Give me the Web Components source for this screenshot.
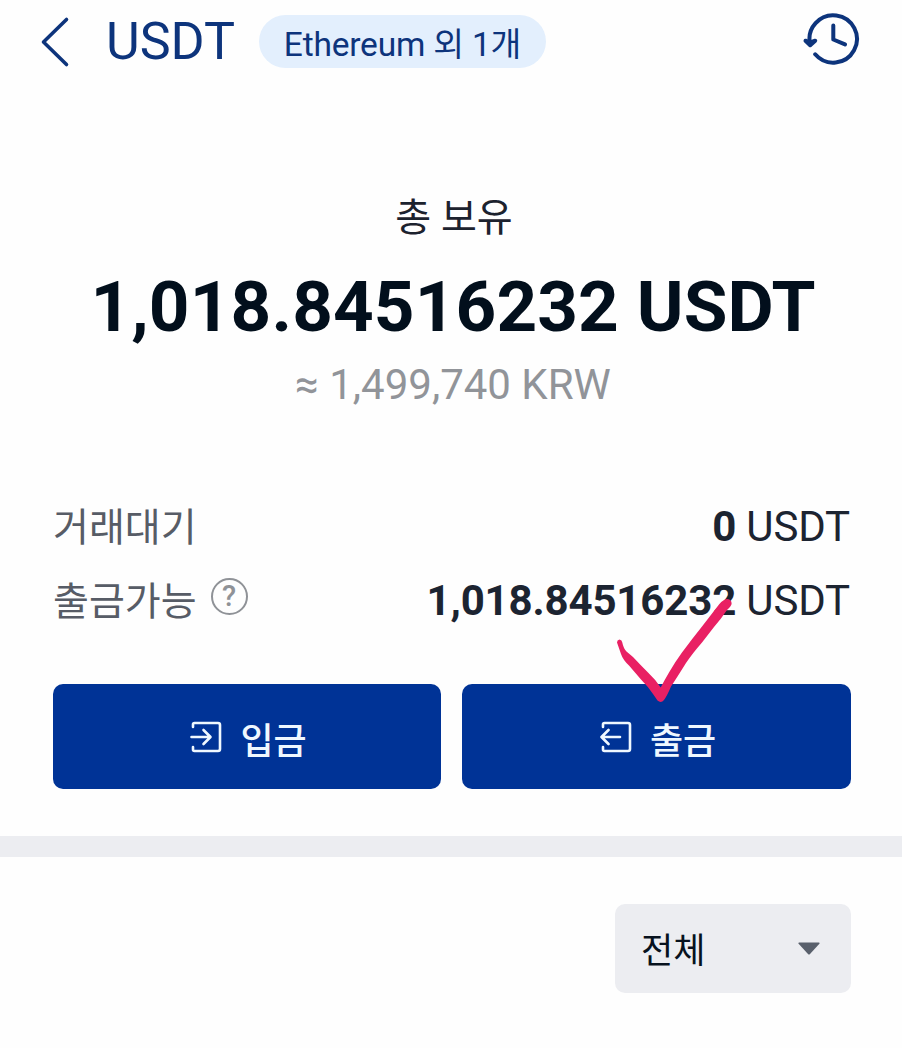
<!DOCTYPE html>
<html lang="ko">
<head>
<meta charset="utf-8">
<title>USDT</title>
<style>
  body {
    margin: 0;
    background: #fefefe;
    font-family: Roboto, "Noto Sans CJK KR", sans-serif;
  }
</style>
</head>
<body>
<wallet-page></wallet-page>

<script>
class WalletElement extends HTMLElement {

  connectedCallback() {
    if (!this.shadowRoot) {
      this.attachShadow({mode: 'open'});
      this.render();
    }
  }

  render() {
    const template = document.createElement('template');
    template.innerHTML = this.template();
    this.shadowRoot.appendChild(template.content.cloneNode(true));
  }
}

class WalletHeader extends WalletElement {
  template() {
    return `
      <style>
        :host {
          display: flex;
          align-items: center;
          box-sizing: border-box;
          height: 83px;
          padding: 0 40px 0 38px;
          color: #0d347c;
        }
        svg {
          display: block;
          fill: none;
          stroke: currentColor;
          stroke-width: 3.6;
          stroke-linecap: round;
          stroke-linejoin: round;
        }
        h1 {
          margin: 0 0 0 34px;
          width: 132px;
          font-size: 52px;
          font-weight: 400;
          line-height: 84px;
        }
        .network {
          box-sizing: border-box;
          width: 287px;
          height: 53px;
          margin-left: 21px;
          padding-top: 5px;
          border-radius: 27px;
          background: #e3effd;
          font-size: 33.5px;
          letter-spacing: -.2px;
          line-height: 49px;
          text-align: center;
          white-space: nowrap;
        }
        .history {
          margin: -6px 0 0 auto;
        }
      </style>
      <svg width="34" height="54" viewBox="0 0 34 54"><path d="M28.5 4.5 5.5 27 28.5 49.5"/></svg>
      <h1><slot></slot></h1>
      <div class="network"><slot name="network"></slot></div>
      <svg class="history" width="60" height="56" viewBox="0 0 60 56">
        <path stroke-width="4" d="M8.2 33.500A23.7 23.700 0 1 1 13.2 43.300M31.300 14.500V28.500L43 33.400"/>
        <path stroke-width="4" fill="currentColor" d="M3.500 29.700 8.200 34.200 13.200 29.700 8.200 31.500Z"/>
      </svg>
    `;
  }
}

class TotalBalance extends WalletElement {
  template() {
    return `
      <style>
        :host {
          display: flex;
          flex-direction: column;
          align-items: center;
          padding-left: 4px;
          white-space: nowrap;
        }
        .label {
          padding-left: 2px;
          color: #1c222e;
          font-size: 39px;
          line-height: 60px;
        }
        .amount {
          margin-top: 14px;
          color: #020f1c;
          font-size: 71px;
          font-weight: 700;
          letter-spacing: .12px;
          line-height: 90px;
        }
        .fiat {
          margin-top: 3px;
          color: #919499;
          font-size: 42px;
          line-height: 60px;
        }
      </style>
      <div class="label"><slot name="label"></slot></div>
      <div class="amount"><slot></slot></div>
      <div class="fiat"><slot name="fiat"></slot></div>
    `;
  }
}

class BalanceRow extends WalletElement {
  template() {
    return `
      <style>
        :host {
          display: flex;
          align-items: baseline;
          height: 74px;
          line-height: 74px;
          color: #1c2431;
          font-size: 42px;
          white-space: nowrap;
        }
        .label {
          color: #575c66;
          font-size: 39px;
        }
        .value {
          margin-left: auto;
          letter-spacing: -.15px;
        }
        ::slotted(b) {
          font-weight: 700;
        }
      </style>
      <span class="label"><slot name="label"></slot></span>
      <slot name="help"></slot>
      <span class="value"><slot></slot></span>
    `;
  }
}

class HelpBadge extends WalletElement {
  template() {
    return `
      <style>
        :host {
          display: block;
          align-self: center;
          box-sizing: border-box;
          width: 37px;
          height: 37px;
          margin: -9px 0 0 14px;
          border: 2.5px solid #8f9297;
          border-radius: 50%;
          color: #8f9297;
          font-size: 29px;
          font-weight: 500;
          line-height: 33px;
          text-align: center;
        }
      </style>
      <slot></slot>
    `;
  }
}

class ActionButton extends WalletElement {
  template() {
    const arrow = this.getAttribute('direction') === 'in'
      ? 'M1.5 16H20M13.5 9 20.5 16 13.5 23'
      : 'M20 16H2M8.5 9 1.5 16 8.5 23';
    return `
      <style>
        :host {
          display: flex;
          justify-content: center;
          align-items: center;
          box-sizing: border-box;
          height: 105px;
          padding-left: 3px;
          border-radius: 10px;
          background: #003396;
          color: #eff8ff;
        }
        svg {
          display: block;
          fill: none;
          stroke: currentColor;
          stroke-width: 2.6;
          stroke-linecap: round;
          stroke-linejoin: round;
        }
        span {
          margin: 10px 0 0 18px;
          font-size: 36px;
          font-weight: 500;
          line-height: 50px;
        }
      </style>
      <svg width="32" height="32" viewBox="0 0 32 32">
        <path d="M3 6V3.5Q3 2 4.5 2H28Q30 2 30 4V28Q30 30 28 30H4.5Q3 30 3 28.5V26"/>
        <path d="${arrow}"/>
      </svg>
      <span><slot></slot></span>
    `;
  }
}

class FilterSelect extends WalletElement {
  template() {
    return `
      <style>
        :host {
          display: flex;
          align-items: center;
          justify-content: space-between;
          box-sizing: border-box;
          width: 236px;
          height: 89px;
          padding: 0 31px 0 26px;
          border-radius: 10px;
          background: #ecedf1;
          color: #08121e;
          font-size: 35px;
        }
        span {
          margin-top: 6px;
          line-height: 50px;
        }
        svg {
          display: block;
          fill: #59606c;
        }
      </style>
      <span><slot></slot></span>
      <svg width="22" height="13" viewBox="0 0 22 13"><path d="M1 .5H21Q22 .7 21.4 1.7L12 12Q11 13 10 12L.6 1.7Q0 .7 1 .5Z"/></svg>
    `;
  }
}

// Hand-drawn tick, lies over the withdraw button and the row above it
class MarkerTick extends WalletElement {
  template() {
    return `
      <style>
        :host {
          position: absolute;
          right: 119px;
          top: -87px;
          pointer-events: none;
        }
        svg {
          display: block;
          fill: #e92063;
        }
      </style>
      <svg width="116" height="106" viewBox="616 598 116 106">
        <path d="M617 643.5Q617 641 619.5 640.5Q622 641 622.3 643.5Q623.5 649.5 626.5 652.5L633 658Q640 665.5 648 673.5Q656 681 660.7 688.5Q664 682 669 673.5Q675 663 682 653.5Q692 640 702 627.5L719 605.5Q723.5 600 727.5 600Q731.8 600.5 731.6 605Q731 607.5 727 611Q721 620 714 628L702 643.5Q692 655 686 664Q676 680 671 687.5Q667 697 664 701Q661 704.5 657.5 701.5L653 695Q648 687.5 641 680.5L629 666.5Q623 661 621 655Z"/>
      </svg>
    `;
  }
}

class WalletPage extends WalletElement {
  template() {
    return `
      <style>
        :host {
          display: block;
          height: 1048px;
          overflow: hidden;
        }
        total-balance {
          margin-top: 105px;
        }
        .rows {
          margin: 75px 52px 0 53px;
        }
        .actions {
          position: relative;
          display: grid;
          grid-template-columns: 388px 389px;
          gap: 21px;
          margin: 46px 51px 0 53px;
        }
        .divider {
          height: 21px;
          margin-top: 47px;
          background: #ecedf1;
        }
        .filter {
          display: flex;
          justify-content: flex-end;
          margin: 47px 51px 0;
        }
      </style>
      <wallet-header>USDT<span slot="network">Ethereum 외 1개</span></wallet-header>
      <total-balance>
        <span slot="label">총 보유</span>
        1,018.84516232 USDT
        <span slot="fiat">≈ 1,499,740 KRW</span>
      </total-balance>
      <div class="rows">
        <balance-row><span slot="label">거래대기</span><b>0</b> USDT</balance-row>
        <balance-row><span slot="label">출금가능</span><help-badge slot="help">?</help-badge><b>1,018.84516232</b> USDT</balance-row>
      </div>
      <div class="actions">
        <action-button direction="in">입금</action-button>
        <action-button direction="out">출금</action-button>
        <marker-tick></marker-tick>
      </div>
      <div class="divider"></div>
      <div class="filter"><filter-select>전체</filter-select></div>
    `;
  }
}

customElements.define('wallet-header', WalletHeader);
customElements.define('total-balance', TotalBalance);
customElements.define('balance-row', BalanceRow);
customElements.define('help-badge', HelpBadge);
customElements.define('action-button', ActionButton);
customElements.define('filter-select', FilterSelect);
customElements.define('marker-tick', MarkerTick);
customElements.define('wallet-page', WalletPage);
</script>
</body>
</html>
